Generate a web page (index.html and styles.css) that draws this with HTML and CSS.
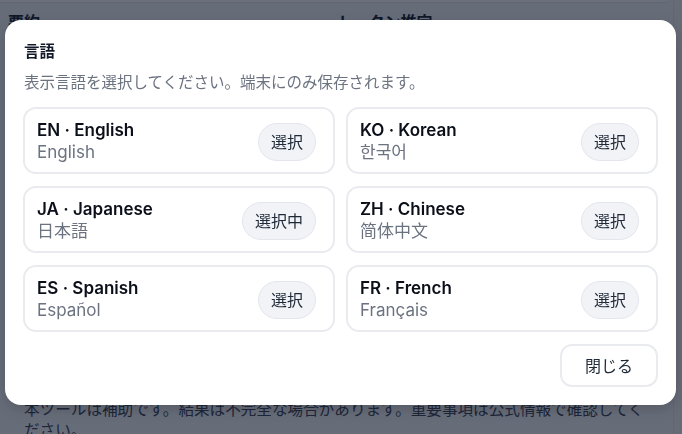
FILE: index.html
```html
<!DOCTYPE html>
<html lang="ja">
<head>
<meta charset="utf-8">
<title>言語</title>
<link rel="stylesheet" href="styles.css">
</head>
<body>
<div class="page">
  <div class="top-card"></div>
  <div class="cols">
    <h2 class="sec">要約</h2>
    <h2 class="sec">トークン推定</h2>
  </div>
  <div class="spacer"></div>
  <p class="note">本ツールは補助です。結果は不完全な場合があります。重要事項は公式情報で確認してください。</p>
</div>

<div class="backdrop">
  <div class="modal" role="dialog">
    <h1 class="m-title">言語</h1>
    <p class="m-sub">表示言語を選択してください。端末にのみ保存されます。</p>
    <div class="grid">
      <div class="opt">
        <div class="opt-text"><div class="opt-name">EN · English</div><div class="opt-native">English</div></div>
        <button class="pick">選択</button>
      </div>
      <div class="opt">
        <div class="opt-text"><div class="opt-name">KO · Korean</div><div class="opt-native" lang="ko">한국어</div></div>
        <button class="pick">選択</button>
      </div>
      <div class="opt">
        <div class="opt-text"><div class="opt-name">JA · Japanese</div><div class="opt-native">日本語</div></div>
        <button class="pick">選択中</button>
      </div>
      <div class="opt">
        <div class="opt-text"><div class="opt-name">ZH · Chinese</div><div class="opt-native" lang="zh-CN">简体中文</div></div>
        <button class="pick">選択</button>
      </div>
      <div class="opt">
        <div class="opt-text"><div class="opt-name">ES · Spanish</div><div class="opt-native">Español</div></div>
        <button class="pick">選択</button>
      </div>
      <div class="opt">
        <div class="opt-text"><div class="opt-name">FR · French</div><div class="opt-native">Français</div></div>
        <button class="pick">選択</button>
      </div>
    </div>
    <div class="foot"><button class="close">閉じる</button></div>
  </div>
</div>
</body>
</html>
```

FILE: styles.css
```css
* { box-sizing: border-box; }
html, body { margin: 0; padding: 0; }
body {
  font-family: Inter, "Noto Sans CJK JP", sans-serif;
  background: #f3f4f6;
  color: #111827;
  width: 682px;
  height: 434px;
  overflow: hidden;
}
.page {
  width: 674px;
  height: 434px;
  background: #f7f8fa;
  border-right: 1px solid #e5e7eb;
}
.top-card {
  height: 3px;
  margin-right: 4px;
  background: #ffffff;
  border-bottom: 1px solid #e5e7eb;
  border-radius: 0 0 12px 0;
}
.cols {
  display: flex;
  padding: 0 8px;
  margin-top: 8px;
}
.sec {
  margin: 0;
  font-size: 16px;
  font-weight: 700;
  line-height: 22px;
  width: 342px;
  color: #111827;
}
.spacer { height: 366px; }
.note {
  margin: 0;
  padding: 0 0 0 24px;
  width: 656px;
  font-size: 15.6px;
  line-height: 21px;
  color: #374151;
}
.backdrop {
  position: fixed;
  inset: 0;
  background: rgba(15, 23, 42, 0.62);
}
.modal {
  position: absolute;
  left: 5px;
  top: 20px;
  width: 671px;
  background: #ffffff;
  border-radius: 16px;
  padding: 18px;
  box-shadow: 0 4px 14px rgba(0, 0, 0, 0.18);
}
.m-title {
  margin: 0 0 0 1px;
  font-size: 15.5px;
  font-weight: 600;
  line-height: 28px;
  color: #111827;
}
.m-sub {
  margin: 5px 0 0 1px;
  font-size: 15.5px;
  line-height: 24px;
  color: #6b7280;
}
.grid {
  margin-top: 12px;
  display: grid;
  grid-template-columns: 1fr 1fr;
  column-gap: 11px;
  row-gap: 12px;
}
.opt {
  display: flex;
  align-items: center;
  justify-content: space-between;
  border: 2px solid #e9ebef;
  border-radius: 13px;
  padding: 11px 17px 9px 12px;
  height: 67px;
}
.opt-name {
  font-size: 17px;
  font-weight: 600;
  line-height: 21px;
  color: #0b0f19;
}
.opt-native {
  font-size: 17px;
  line-height: 21px;
  color: #6b7280;
  margin-top: 1px;
}
.pick {
  font-family: inherit;
  font-size: 16px;
  line-height: 22px;
  color: #1f2937;
  background: #f1f3f7;
  border: 1px solid #e3e6ec;
  border-radius: 999px;
  padding: 7px 12px;
  cursor: pointer;
}
.foot {
  display: flex;
  justify-content: flex-end;
  margin-top: 12px;
}
.close {
  font-family: inherit;
  font-size: 16px;
  line-height: 22px;
  color: #1f2937;
  background: #ffffff;
  border: 2px solid #e9ebef;
  border-radius: 12px;
  padding: 9px 23px 8px;
  cursor: pointer;
}
```
